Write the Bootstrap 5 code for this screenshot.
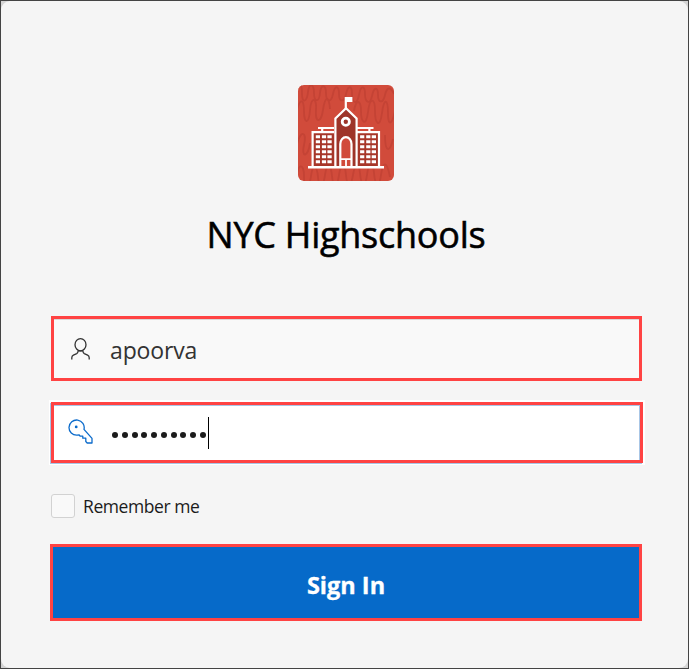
<!DOCTYPE html>
<html lang="en">
<head>
<meta charset="utf-8">
<meta name="viewport" content="width=device-width, initial-scale=1">
<title>NYC Highschools</title>
<link href="https://cdn.jsdelivr.net/npm/bootstrap@5.3.0/dist/css/bootstrap.min.css" rel="stylesheet">
<style>
body{background:#d9d9d9;font-family:"Open Sans","Noto Sans",sans-serif;color:#1b1b1b}
.window-frame{height:669px;border:1px solid #444;background:#d4d4d4}
.login-panel{background:#f5f5f5;border-radius:9px;padding:84px 46px 0 49px}
.app-title{font-size:36px;font-weight:500;line-height:50px;color:#000;margin:29px 0 56px;letter-spacing:-.25px;white-space:nowrap;-webkit-text-stroke:.55px #000}
.field-box{border:3px solid #ff4343;margin-left:1px}
.field-user{height:65px;width:591px;background:#f9f9f9;box-shadow:inset 0 1px #d8d8d8}
.field-pass{height:61px;width:592px;margin-top:21px;background:#fff;box-shadow:inset 0 1px #a8c6e6,inset -1px 0 #a8c6e6,-1px 1px #a8c6e6,0 0 0 2px #fff}
.field-icon-user{margin-left:16px}
.field-icon-key{margin-left:14px;margin-bottom:2px}
.login-field .form-control{height:100%;margin-left:18px;padding:3px 0 0;border:0;border-radius:0;background:transparent;box-shadow:none;font-size:23px;letter-spacing:-.15px;line-height:30px;color:#333}
.dots{gap:3.75px;margin-left:19px}
.dots i{width:6px;height:6px;border-radius:50%;background:#1b1b1b}
.caret{width:1px;height:32px;margin-left:2px;background:#000}
.check-row{margin:31px 0 26px 1px;height:24px}
.check-row .form-check-input{width:24px;height:24px;margin:0;border:1px solid #d2d2d2;border-radius:3px;background-color:#f9f9f9}
.check-row label{font-size:17.5px;line-height:24px;margin-left:8px;letter-spacing:-.42px;color:#1b1b1b}
.btn-signin{width:592px;height:77px;border:3px solid #ff4343;border-radius:0;background:#066ac9;color:#fff;font-weight:700;font-size:23.5px;line-height:32px;-webkit-text-stroke:.3px #fff}
</style>
<script src="https://cdn.jsdelivr.net/npm/bootstrap@5.3.0/dist/js/bootstrap.bundle.min.js"></script>
</head>
<body class="overflow-hidden">
<main class="window-frame">
<form class="login-panel h-100">
<svg class="d-block mx-auto" width="96" height="96" viewBox="0 0 96 96" role="img" aria-label="School">
<defs><clipPath id="tile"><rect width="96" height="96" rx="6"/></clipPath></defs>
<g clip-path="url(#tile)">
<rect width="96" height="96" fill="#d14b3b"/>
<g fill="none" stroke="#c44335" stroke-width="1.8">
<path d="M-2 8C2-4 4-1 4 9s5 8 6-2 6-8 6 1 5 10 6 0 6-8 6 0 5 11 7 1 6-8 6 0 5 9 7 0 6-9 6 0 5 12 7 1 6-9 6-1 5 12 7 2 6-9 6-1 5 9 7 0 6-8 9-1"/>
<path d="M-2 30c3-17 8-18 8-4s5 13 6-1 7-13 6 0 5 14 7 0 6-15 7-1M56 26c2-13 7-11 7 0s5 17 7 1 7-14 7-1 5 18 7 2 6-14 6 0 4 12 7-2"/>
<path d="M-1 59c4-15 10-12 7 1s4 13 6-2M87 50c0 18 5 18 8 4M-2 95c2-18 8-17 8-4s5 15 7 0 6-10 7 1 5 12 7-2 6-10 7 1 5 13 7-1 6-12 7 0 5 12 7 0 6-14 7-2 5 17 7 2 6-14 7-2 5 17 7 2 6-14 9 2"/>
</g>
<path d="M13.7 46.3H36V82H13.7zM59 46.3h22.9V82H59z" fill="#a73629"/>
<path d="M37.6 34 48 24l10.4 10v48H37.6z" fill="#9e3429"/>
<g fill="none" stroke="#fff" stroke-width="2.2">
<path d="M14.6 81V47.2H36M81 81V47.2H59M20 43h16M59 43h16.5M24.2 43v4M71.4 43v4"/>
<path d="M37.4 81V33.5L48 23.3l10.6 10.2V81"/>
<path d="M42.3 81V59a5.6 6.9 0 0 1 11.2 0V81" fill="#d14b3b"/>
<circle cx="47.8" cy="36.7" r="3.6" stroke-width="2.8"/>
<path d="M10 82.2h76" stroke-width="2.4"/>
<path d="M43 74.2h10.5M48 75v7" stroke-width="1.8"/>
</g>
<path d="M46.7 12h7.7v5h-5.5v7h-2.2z" fill="#fff"/>
<g fill="none" stroke="#fff" stroke-width="3">
<path id="windows" d="M17.8 51.7H22m1.9 0h4.2m1.3 0h4.3M17.8 56.7H22m1.9 0h4.2m1.3 0h4.3M17.8 61.7H22m1.9 0h4.2m1.3 0h4.3M17.8 66.7H22m1.9 0h4.2m1.3 0h4.3M17.8 71.7H22m1.9 0h4.2m1.3 0h4.3M17.8 76.7H22m1.9 0h4.2m1.3 0h4.3"/>
<use href="#windows" x="44.3"/>
</g>
</g>
</svg>
<h1 class="app-title text-center">NYC Highschools</h1>
<div class="field-box field-user login-field d-flex align-items-center">
<svg class="field-icon-user flex-shrink-0" width="22" height="24" viewBox="0 0 22 24" fill="none" stroke="#333" stroke-width="1.3"><ellipse cx="10.5" cy="7.7" rx="5.5" ry="6.1"/><path d="M1.8 22.5v-1.7c0-1.4.5-2.2 1.6-2.7l3.3-1.5c.8-.4 1.2-1 1.5-2.8h4.6c.3 1.8.7 2.4 1.5 2.8l3.3 1.5c1.1.5 1.6 1.3 1.6 2.7v1.7"/></svg>
<input class="form-control" aria-label="Username" value="apoorva">
</div>
<div class="field-box field-pass d-flex align-items-center" role="textbox" aria-label="Password">
<svg class="field-icon-key flex-shrink-0" width="25" height="25" viewBox="0 0 25 25" fill="none" stroke="#0b6bcb" stroke-width="1.3" stroke-linejoin="round"><path d="M16 10.4A7.6 7.6 0 1 0 9 16.2l2.2-.2.9 1.2h2.7v2h3v3.3l1.4 1.5H24v-4.6z"/><circle cx="8.2" cy="7.9" r="1.4" fill="#0b6bcb" stroke="none"/></svg>
<div class="dots d-flex align-items-center mt-1"><i></i><i></i><i></i><i></i><i></i><i></i><i></i><i></i><i></i><i></i></div>
<span class="caret"></span>
</div>
<div class="check-row d-flex align-items-center">
<input class="form-check-input" type="checkbox" id="remember"><label for="remember">Remember me</label>
</div>
<button class="btn btn-signin p-0 pt-1" type="button">Sign In</button>
</form>
</main>
</body>
</html>
